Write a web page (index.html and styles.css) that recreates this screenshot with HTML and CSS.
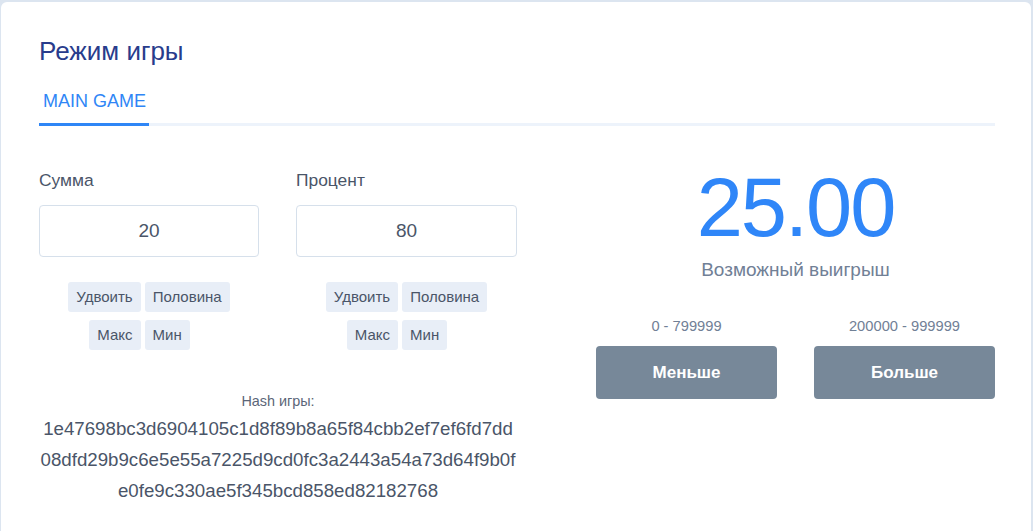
FILE: index.html
```html
<!DOCTYPE html>
<html lang="ru">
<head>
<meta charset="utf-8">
<link rel="stylesheet" href="styles.css">
</head>
<body>
<div class="card">
  <h1 class="title">Режим игры</h1>
  <div class="tabs">
    <div class="tab active">MAIN GAME</div>
  </div>
  <div class="content">
    <div class="left">
      <div class="fields">
        <div class="field">
          <div class="label">Сумма</div>
          <div class="input">20</div>
          <div class="btns">
            <div class="row"><span class="sbtn">Удвоить</span><span class="sbtn">Половина</span></div>
            <div class="row row-2"><span class="sbtn">Макс</span><span class="sbtn">Мин</span></div>
          </div>
        </div>
        <div class="field">
          <div class="label">Процент</div>
          <div class="input">80</div>
          <div class="btns">
            <div class="row"><span class="sbtn">Удвоить</span><span class="sbtn">Половина</span></div>
            <div class="row row-2"><span class="sbtn">Макс</span><span class="sbtn">Мин</span></div>
          </div>
        </div>
      </div>
      <div class="hash">
        <div class="hash-label">Hash игры:</div>
        <div class="hash-value">1e47698bc3d6904105c1d8f89b8a65f84cbb2ef7ef6fd7dd08dfd29b9c6e5e55a7225d9cd0fc3a2443a54a73d64f9b0fe0fe9c330ae5f345bcd858ed82182768</div>
      </div>
    </div>
    <div class="right">
      <div class="win">25.00</div>
      <div class="win-label">Возможный выигрыш</div>
      <div class="bets">
        <div class="bet">
          <div class="range">0 - 799999</div>
          <button class="bbtn">Меньше</button>
        </div>
        <div class="bet">
          <div class="range">200000 - 999999</div>
          <button class="bbtn">Больше</button>
        </div>
      </div>
    </div>
  </div>
</div>
</body>
</html>
```
FILE: styles.css
```css
* { box-sizing: border-box; }
html, body { margin: 0; padding: 0; }
body {
  background: #dce5f0;
  font-family: "Liberation Sans", Arial, sans-serif;
  color: #4a5568;
  height: 531px;
  overflow: hidden;
  padding: 2px 2px 0 1px;
}
.card {
  background: #fff;
  border-radius: 6px;
  padding: 34px 36px 0 38px;
  height: 560px;
}
.title {
  margin: 0;
  font-size: 26px;
  font-weight: normal;
  color: #283c8c;
  line-height: 30px;
}
.tabs {
  margin-top: 23px;
  border-bottom: 3px solid #edf3fb;
  display: flex;
}
.tab {
  padding: 0 4px 10px 4px;
  font-size: 18px;
  line-height: 24px;
  color: #2f86f6;
  border-bottom: 3px solid #2f86f6;
  margin-bottom: -3px;
  width: 110px;
  white-space: nowrap;
}
.content {
  display: grid;
  grid-template-columns: 478px 1fr;
  column-gap: 79px;
}
.fields {
  display: grid;
  grid-template-columns: 220px 221px;
  column-gap: 37px;
  padding-top: 44px;
}
.label {
  font-size: 17.4px;
  line-height: 20px;
  color: #4a5568;
}
.input {
  margin-top: 15px;
  height: 52px;
  border: 1px solid #d6e0eb;
  border-radius: 4px;
  text-align: center;
  font-size: 19px;
  line-height: 50px;
  color: #4a5568;
}
.btns {
  margin-top: 25px;
  display: flex;
  flex-direction: column;
  gap: 8px;
}
.row {
  display: flex;
  justify-content: center;
  gap: 4px;
}
.row-2 {
  padding-right: 19px;
}
.sbtn {
  background: #e8eef7;
  border-radius: 3px;
  font-size: 15px;
  line-height: 30px;
  padding: 0 8px;
  color: #4a5568;
}
.hash {
  text-align: center;
  margin-top: 43px;
}
.hash-label {
  font-size: 14.4px;
  line-height: 16px;
  color: #5b6678;
}
.hash-value {
  margin-top: 4px;
  font-size: 18.7px;
  line-height: 31px;
  word-break: break-all;
  color: #4a5568;
}
.right {
  text-align: center;
  padding-top: 37px;
}
.win {
  font-size: 83px;
  line-height: 90px;
  letter-spacing: -2px;
  color: #2f86f8;
}
.win-label {
  font-size: 19px;
  line-height: 22px;
  color: #718096;
  margin-top: 6px;
}
.bets {
  margin-top: 36px;
  display: grid;
  grid-template-columns: 181px 181px;
  justify-content: space-between;
}
.range {
  font-size: 14.7px;
  line-height: 18px;
  color: #718096;
}
.bbtn {
  display: block;
  margin-top: 11px;
  width: 100%;
  height: 53px;
  border: 0;
  border-radius: 4px;
  background: #778899;
  color: #fff;
  font-family: "Liberation Sans", Arial, sans-serif;
  font-size: 17px;
  font-weight: bold;
}
```
